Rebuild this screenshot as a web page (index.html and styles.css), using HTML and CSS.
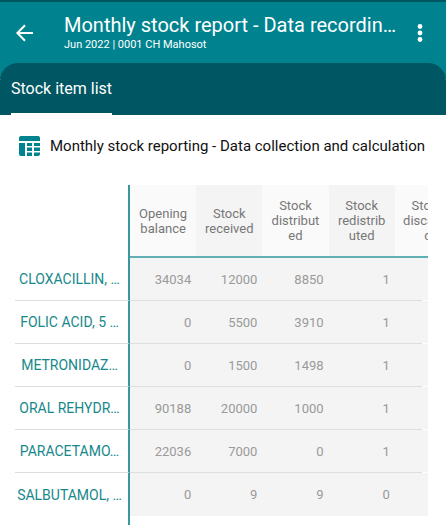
FILE: index.html
```html
<!DOCTYPE html>
<html lang="en">
<head>
<meta charset="utf-8">
<meta name="viewport" content="width=device-width, initial-scale=1">
<title>Monthly stock report</title>
<link rel="stylesheet" href="styles.css">
</head>
<body>
<header class="app-bar">
  <button class="icon-button" type="button" aria-label="Back">
    <svg width="18" height="18" viewBox="0 0 18 18" fill="none" stroke="currentColor" stroke-width="2"><path d="M17 9H2M9 1.2L1.4 9L9 16.8"/></svg>
  </button>
  <div class="titles">
    <h1>Monthly stock report - Data recordin…</h1>
    <p>Jun 2022 | 0001 CH Mahosot</p>
  </div>
  <button class="icon-button" type="button" aria-label="More options">
    <svg width="6" height="20" viewBox="0 0 6 20" fill="currentColor"><circle cx="3" cy="3.5" r="2.4"/><circle cx="3" cy="10" r="2.4"/><circle cx="3" cy="16.5" r="2.4"/></svg>
  </button>
</header>
<nav class="tabs"><a class="tab" href="#items" aria-current="page">Stock item list</a></nav>
<main id="items">
  <div class="section-title">
    <svg width="21" height="20" viewBox="0 0 21 20" fill="currentColor"><path d="M2 0H19Q21 0 21 2V5H0V2Q0 0 2 0ZM0 7H6V20H2Q0 20 0 18ZM8 7H13V10H8ZM15 7H21V10H15ZM8 11.5H13V15H8ZM15 11.5H21V15H15ZM8 16.5H13V20H8ZM15 16.5H21V18Q21 20 19 20H15Z"/></svg>
    <h2>Monthly stock reporting - Data collection and calculation</h2>
  </div>
  <div class="table-scroll">
    <table>
      <colgroup><col class="name-col"><col class="value-col"><col class="value-col"><col class="value-col"><col class="value-col"><col class="value-col"></colgroup>
      <thead>
        <tr><td></td><th scope="col">Opening balance</th><th scope="col">Stock received</th><th scope="col">Stock distributed</th><th scope="col">Stock redistributed</th><th scope="col">Stock discarded</th></tr>
      </thead>
      <tbody>
        <tr><th scope="row">CLOXACILLIN, …</th><td>34034</td><td>12000</td><td>8850</td><td>1</td><td></td></tr>
        <tr><th scope="row">FOLIC ACID, 5 …</th><td>0</td><td>5500</td><td>3910</td><td>1</td><td></td></tr>
        <tr><th scope="row">METRONIDAZ…</th><td>0</td><td>1500</td><td>1498</td><td>1</td><td></td></tr>
        <tr><th scope="row">ORAL REHYDR…</th><td>90188</td><td>20000</td><td>1000</td><td>1</td><td></td></tr>
        <tr><th scope="row">PARACETAMO…</th><td>22036</td><td>7000</td><td>0</td><td>1</td><td></td></tr>
        <tr><th scope="row">SALBUTAMOL, …</th><td>0</td><td>9</td><td>9</td><td>0</td><td></td></tr>
      </tbody>
    </table>
  </div>
</main>
</body>
</html>
```
FILE: styles.css
```css
* { box-sizing: border-box; }
body { margin: 0; background: #fff; font-family: Roboto, sans-serif; color: #111; }
h1, h2, p { margin: 0; font-weight: 400; }

.app-bar {
  display: flex;
  align-items: center;
  height: 79px;
  padding: 0 17px 16px 16px;
  border-top: 2px solid #00565f;
  background: #00838f;
  color: #fff;
}
.icon-button {
  display: flex;
  padding: 0;
  border: 0;
  background: none;
  color: inherit;
}
.app-bar .icon-button:last-child { padding-right: 6px; }
.titles { flex: 1; min-width: 0; margin-left: 30px; }
h1 {
  overflow: hidden;
  white-space: nowrap;
  font-size: 20px;
  line-height: 24px;
}
.titles p { font-size: 11px; line-height: 16px; }

.tabs {
  display: flex;
  height: 52px;
  margin-top: -16px;
  padding: 0 11px;
  border-radius: 18px 18px 0 0;
  background: #005662;
}
.tab {
  border-bottom: 2px solid #fff;
  color: #fff;
  font-size: 16px;
  line-height: 52px;
  text-decoration: none;
}

.section-title {
  display: flex;
  align-items: center;
  gap: 10px;
  height: 62px;
  padding-left: 19px;
  color: #00838f;
}
h2 { color: #111; font-size: 15px; white-space: nowrap; }

.table-scroll { margin: 8px 18px 0 15px; overflow: hidden; }
.table-scroll::after {
  content: "";
  display: block;
  height: 9px;
  margin-left: 113px;
  border-left: 2px solid #38989c;
}
table {
  width: 446px;
  table-layout: fixed;
  border-collapse: separate;
  border-spacing: 0;
  font-size: 13px;
}
.name-col { width: 115px; }
td, th { padding: 0; font-weight: 400; }
thead tr { height: 73px; }
thead th {
  padding: 0 7px;
  border-bottom: 2px solid #60afb3;
  background: #fafafa;
  color: #777;
  line-height: 15px;
  overflow-wrap: anywhere;
}
thead th:nth-child(odd) { background: #f4f4f4; }
thead td, tbody th { border-right: 2px solid #38989c; }
tbody tr { height: 43px; }
tbody td {
  padding-right: 5px;
  border-bottom: 1px solid #dedede;
  background: #f4f4f4;
  color: #9a9a9a;
  text-align: right;
}
tbody th {
  padding-right: 4px;
  border-bottom: 1px solid #dedede;
  color: #16888b;
  font-size: 14px;
  text-align: center;
  white-space: nowrap;
}
tbody tr:not(:last-child) td:last-child {
  border-bottom: 0;
  background: linear-gradient(90deg, #dedede 27px, #fff 27px) bottom / 100% 1px no-repeat #f4f4f4;
}
tbody tr:last-child > * { border-bottom: 0; }
```
